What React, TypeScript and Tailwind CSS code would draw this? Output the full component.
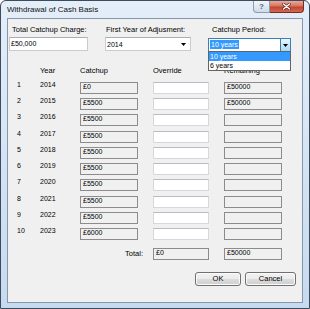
const rows = [
  { n: 1, y: 2014, c: "£0", r: "£50000" },
  { n: 2, y: 2015, c: "£5500", r: "£50000" },
  { n: 3, y: 2016, c: "£5500", r: "" },
  { n: 4, y: 2017, c: "£5500", r: "" },
  { n: 5, y: 2018, c: "£5500", r: "" },
  { n: 6, y: 2019, c: "£5500", r: "" },
  { n: 7, y: 2020, c: "£5500", r: "" },
  { n: 8, y: 2021, c: "£5500", r: "" },
  { n: 9, y: 2022, c: "£5500", r: "" },
  { n: 10, y: 2023, c: "£6000", r: "" },
];

function ReadBox({ w, text }: { w: string; text: string }) {
  return (
    <div className={`${w} h-[12px] mt-[2px] border border-[#8c8c8c] bg-[#f0f0f0] pl-[2px] text-[7px] leading-[7px]`}>
      {text}
    </div>
  );
}

function Arrow() {
  return (
    <svg width="5" height="3" viewBox="0 0 5 3" className="block">
      <polygon points="0,0 5,0 2.5,3" fill="#000" />
    </svg>
  );
}

export default function App() {
  return (
    <div className="w-[310px] h-[309px] font-['Liberation_Sans',Arial,sans-serif] text-black">
      <div className="w-full h-full flex flex-col rounded-t-[6px] border border-[#3e4b5b] bg-gradient-to-b from-[#e4eef9] to-[#c6daf0] overflow-hidden">
        {/* title bar */}
        <div className="h-[17px] flex items-start">
          <div className="flex-1 pl-[6px] pt-[3px] text-[8px] leading-[11px] text-[#111]">Withdrawal of Cash Basis</div>
          <div className="flex mr-[5px]">
            <div className="w-[17px] h-[12px] flex items-center justify-center border border-t-0 border-[#8b9bb1] rounded-bl-[4px] bg-gradient-to-b from-[#f3f6fa] to-[#cfdbea] text-[8px] leading-[8px] font-bold text-[#56657a]">
              ?
            </div>
            <div className="w-[34px] h-[12px] flex items-center justify-center border border-l-0 border-t-0 border-[#7b2a20] rounded-br-[4px] bg-[linear-gradient(#e9aa9a,#d77462_45%,#c4442e_55%,#d06a55)]">
              <svg width="9" height="7" viewBox="0 0 9 7">
                <path d="M1.5 1 L7.5 6 M7.5 1 L1.5 6" stroke="#5a1a12" strokeWidth="2.6" strokeLinecap="round" />
                <path d="M1.5 1 L7.5 6 M7.5 1 L1.5 6" stroke="#fff" strokeWidth="1.5" strokeLinecap="round" />
              </svg>
            </div>
          </div>
        </div>

        {/* client area */}
        <div className="mx-[6px] mb-[5px] flex-1 border border-[#8497ad] bg-[#f0f0f0] flex flex-col text-[7.5px] leading-[10px]">
          {/* top inputs */}
          <div className="pt-[6px] pl-[1px] flex items-start">
            <div className="w-[79px] flex flex-col">
              <div className="pl-[3px]">Total Catchup Charge:</div>
              <div className="mt-[2px] h-[14px] border border-[#c9ccd2] border-t-[#abadb3] bg-white pl-[1px] text-[7px] leading-[11px]">£50,000</div>
            </div>
            <div className="ml-[17px] w-[86px] flex flex-col">
              <div className="pl-[1px]">First Year of Adjusment:</div>
              <div className="mt-[2px] h-[14px] border border-[#c9ccd2] border-t-[#abadb3] bg-white pl-[1px] flex items-center justify-between pr-[4px]">
                <span className="text-[7px] leading-[11px]">2014</span>
                <Arrow />
              </div>
            </div>
            <div className="ml-[17px] w-[83px] flex flex-col">
              <div className="pl-[4px]">Catchup Period:</div>
              <div className="relative mt-[3px] h-[14px] border border-[#3c7fb1] bg-white flex items-center pl-[1px]">
                <span className="flex-1">
                  <span className="bg-[#3399ff] text-white px-[1px] text-[7px] leading-[9px] inline-block">10 years</span>
                </span>
                <div className="w-[10px] h-full border-l border-[#3c7fb1] bg-gradient-to-b from-[#eaf6fd] to-[#a7d9f5] flex items-center justify-center">
                  <Arrow />
                </div>
                <div className="absolute left-[-1px] right-[-1px] top-full mt-[0px] h-[20px] border border-[#646464] bg-white flex flex-col z-10">
                  <div className="h-[9px] bg-[#3399ff] text-white pl-[1px] text-[7px] leading-[9px]">10 years</div>
                  <div className="h-[9px] pl-[1px] text-[7px] leading-[9px]">6 years</div>
                </div>
              </div>
            </div>
          </div>

          {/* header */}
          <div className="mt-[14px] h-[13.7px] pl-[9px] flex items-start">
            <div className="w-[23px]" />
            <div className="w-[40px]">Year</div>
            <div className="w-[58px]">Catchup</div>
            <div className="ml-[15px] w-[56px]">Override</div>
            <div className="ml-[15px] w-[58px]">Remaining</div>
          </div>

          {/* rows */}
          <div className="flex flex-col">
            {rows.map((r) => (
              <div key={r.n} className="h-[16.3px] pl-[9px] flex items-start text-[7px]">
                <div className="w-[23px]">{r.n}</div>
                <div className="w-[40px]">{r.y}</div>
                <ReadBox w="w-[58px]" text={r.c} />
                <div className="ml-[15px] w-[56px] h-[12px] mt-[2px] border border-[#d5d8dd] border-t-[#b9bcc2] bg-white" />
                <div className="ml-[15px]">
                  <ReadBox w="w-[58px]" text={r.r} />
                </div>
              </div>
            ))}
          </div>

          {/* totals */}
          <div className="mt-[3.3px] h-[16.3px] flex items-start">
            <div className="w-[145px] pr-[10px] text-right mt-[3px]">Total:</div>
            <ReadBox w="w-[56px]" text="£0" />
            <div className="ml-[15px]">
              <ReadBox w="w-[58px]" text="£50000" />
            </div>
          </div>

          {/* buttons */}
          <div className="mt-[9.4px] flex justify-end pr-[6px] gap-[4px]">
            <div className="w-[46px] h-[14px] rounded-[3px] border border-[#707070] bg-[linear-gradient(#f2f2f2,#ebebeb_50%,#dddddd_50%,#cfcfcf)] shadow-[inset_0_0_0_1px_#fbfbfb] flex items-center justify-center">
              OK
            </div>
            <div className="w-[51px] h-[14px] rounded-[3px] border border-[#707070] bg-[linear-gradient(#f2f2f2,#ebebeb_50%,#dddddd_50%,#cfcfcf)] shadow-[inset_0_0_0_1px_#fbfbfb] flex items-center justify-center">
              Cancel
            </div>
          </div>
        </div>
      </div>
    </div>
  );
}
